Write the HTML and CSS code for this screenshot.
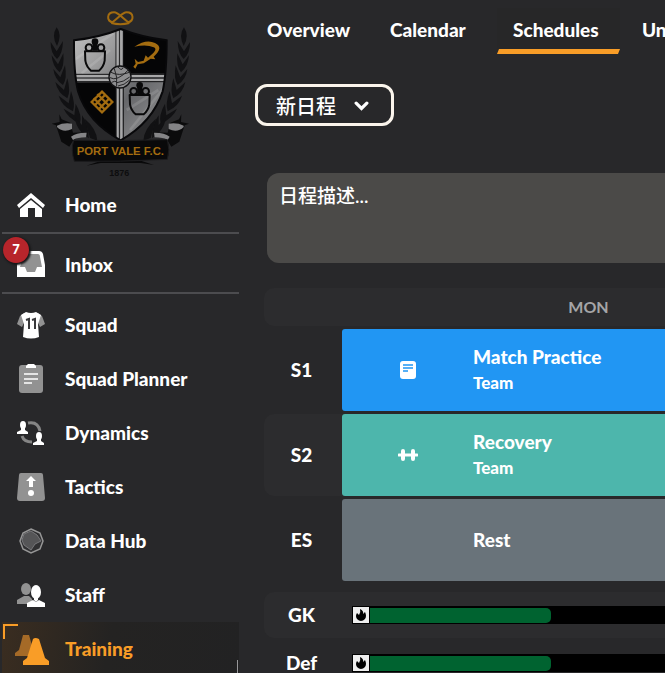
FILE: index.html
```html
<!DOCTYPE html>
<html lang="en">
<head>
    <meta charset="utf-8">
    <title>Training - Schedules</title>
    <link rel="stylesheet" href="styles.css">
</head>
<body>
<div class="app">
    <aside class="sidebar">
        <svg class="crest" viewBox="0 0 720 534" role="img" aria-label="Port Vale F.C. 1876">
            <defs>
                <linearGradient id="silver" x1="0" y1="0" x2="1" y2="1">
                    <stop offset="0" stop-color="#c2c2c2"/>
                    <stop offset=".3" stop-color="#9b9b9c"/>
                    <stop offset=".6" stop-color="#66676a"/>
                    <stop offset="1" stop-color="#9d9d9e"/>
                </linearGradient>
                <clipPath id="shield"><path d="M222 121Q300 112 362 87Q425 112 500 121Q500 220 488 274Q458 366 362 421Q262 367 234 274Q221 220 222 121Z"/></clipPath>
                <g id="vase" fill="none" stroke="#09090a" stroke-width="6">
                    <path d="M-30 -12H30L29 16Q26 34 12 46H-12Q-26 34 -29 16Z" stroke-linejoin="round"/>
                    <circle cx="-18" cy="-23" r="10"/><circle cx="18" cy="-23" r="10"/>
                    <circle cx="0" cy="-41" r="10" fill="#09090a" stroke="none"/>
                    <path d="M0 -36V-14" stroke-width="15"/>
                </g>
                <g id="laurel" fill="#111113">
                    <path d="M170 82Q187 104 171 138Q153 108 170 82Z"/>
                    <path d="M152 126L170 154L189 123Q188 162 171 177Q151 158 152 126Z"/>
                    <path d="M155 166L174 193L190 160Q194 199 179 217Q157 199 155 166Z"/>
                    <path d="M160 207L181 232L195 196Q202 236 189 255Q164 239 160 207Z"/>
                    <path d="M166 246L192 270L202 235Q213 275 202 295Q173 279 166 246Z"/>
                    <path d="M176 287L206 310L213 273Q227 312 219 334Q185 318 176 287Z"/>
                    <path d="M191 326L223 346L227 311Q247 346 240 371Q203 354 191 326Z"/>
                    <path d="M225 352L246 375L246 346Q266 372 266 415L246 399Q225 376 225 352Z"/>
                    <path d="M254 356Q290 386 292 422L270 414Z"/>
                </g>
                <g id="ribbon">
                    <path d="M178 343L185 358L211 368L219 398L262 397L219 422L208 440L184 425L168 376L155 371L179 366Z" fill="#0b0b0c"/>
                    <path d="M171 377Q190 367 216 371V387Q190 400 171 381Z" fill="#838385"/>
                    <path d="M213 410Q230 397 260 398L258 412Q232 412 219 420Z" fill="#858587"/>
                </g>
            </defs>
            <use href="#laurel"/>
            <use href="#laurel" transform="matrix(-1 0 0 1 722 0)"/>
            <g clip-path="url(#shield)">
                <path d="M215 80H505V425H215Z" fill="url(#silver)"/>
                <path d="M369 80H505V221H369ZM215 247H350V425H215Z" fill="#050506"/>
                <path d="M225 178L340 100M245 220L330 150M390 390L495 260M380 330L475 270" stroke="#fff" stroke-opacity=".12" stroke-width="8"/>
                <path d="M348 80V425M358 80V425M370 80V425M215 223H505M215 234H505M215 245H505" stroke="#151516" stroke-width="3"/>
                <path d="M353 80V425M364 80V425M215 228H505M215 240H505" stroke="#a8a8a9" stroke-width="6"/>
            </g>
            <path d="M222 121Q300 112 362 87Q425 112 500 121Q500 220 488 274Q458 366 362 421Q262 367 234 274Q221 220 222 121Z" fill="none" stroke="#08080a" stroke-width="6"/>
            <use href="#vase" transform="translate(285 166)"/>
            <use href="#vase" transform="translate(419 297)"/>
            <g fill="none" stroke="#a36c10" stroke-width="6">
                <path d="M340 68C317 62 321 37 342 37C356 37 366 55 388 69M382 68C405 62 401 37 380 37C366 37 356 55 334 69"/>
                <path d="M334 69Q361 76 388 69"/>
            </g>
            <path d="M403 140Q439 116 465 129Q493 142 461 170L466 178L452 176L431 190L413 193L406 206L400 200L407 191L404 176L414 186L431 182L437 166L444 173Q477 148 461 142Q440 132 403 140Z" fill="#a36c10"/>
            <g fill="none" stroke="#a36c10" stroke-width="7">
                <path d="M281 294L316 330M292 282L328 318M329 294L294 330M318 282L282 318M306 275L337 306L306 337L275 306Z"/>
            </g>
            <circle cx="360" cy="231" r="33" fill="#8e8e90" stroke="#111113" stroke-width="4"/>
            <g fill="none" stroke="#252527" stroke-width="3">
                <path d="M333 217Q356 230 391 216M330 233Q351 246 386 209M343 206Q353 230 350 260M353 200Q364 214 369 204M350 248Q370 247 389 231M354 258Q373 256 389 240M335 247Q346 241 350 246"/>
            </g>
            <use href="#ribbon"/>
            <use href="#ribbon" transform="matrix(-1 0 0 1 722 0)"/>
            <path d="M259 497L301 483H425L462 495L422 489H302Z" fill="#09090a"/>
            <path d="M221 421Q362 423 502 419Q511 450 502 478Q362 486 223 484Q212 450 221 421Z" fill="#09090a" stroke="#1b1b1d" stroke-width="3"/>
            <text class="crest-name" x="361" y="466" text-anchor="middle">PORT VALE F.C.</text>
            <text class="crest-year" x="358" y="527" text-anchor="middle">1876</text>
        </svg>

        <nav class="menu">
            <a class="menu-item" href="#">
                <svg class="icon" viewBox="0 0 30 30"><path fill="#fff" d="M15 3L29 15L27 18L15 8L3 18L1 15Z"/><path fill="#fff" d="M4 19L15 10L26 19V27H19V18H12V27H4Z"/></svg>
                Home
            </a>
            <a class="menu-item divided" href="#">
                <svg class="icon" viewBox="0 0 30 30"><path d="M9 1H23Q26 1 27 4L29 15V27H1V15L5 4Q6 1 9 1Z" fill="#fff"/><path d="M8 4H22Q24 4 24 7L26 17H21L19 22H11L9 17H4Z" fill="#929292"/></svg>
                Inbox
                <span class="badge">7</span>
            </a>
            <a class="menu-item divided" href="#">
                <svg class="icon" viewBox="0 0 30 30"><path d="M8 3L4 6L1 14L6 17L10 9ZM22 3L26 6L29 14L24 17L20 9Z" fill="#929292"/><path d="M10 2Q15 4 20 2L25 5L22 14L23 27Q15 30 7 27L8 14L5 5Z" fill="#fff"/><path d="M10 10L13 9V19M16 10L19 9V19" fill="none" stroke="#39393b" stroke-width="2"/></svg>
                Squad
            </a>
            <a class="menu-item" href="#">
                <svg class="icon" viewBox="0 0 30 30"><rect x="3" y="1" width="24" height="28" rx="3" fill="#929292"/><path d="M12 0H18L20 2V4H10V2Z" fill="#fff"/><path d="M8 10H22M8 15H22M8 19H16" stroke="#fff" stroke-width="1.5"/></svg>
                Squad Planner
            </a>
            <a class="menu-item" href="#">
                <svg class="icon" viewBox="0 0 30 30"><path d="M12 5Q22 3 24 13M6 18Q8 24 16 24" fill="none" stroke="#858585" stroke-width="3"/><g id="person" fill="#fff"><ellipse cx="7" cy="7" rx="3" ry="4"/><path d="M5 9H9V12L12 14V16H1V14L5 12Z"/></g><use href="#person" x="16" y="11"/></svg>
                Dynamics
            </a>
            <a class="menu-item" href="#">
                <svg class="icon" viewBox="0 0 30 30"><path d="M5 1H25Q27 1 27 3L29 26Q29 29 26 29H4Q1 29 1 26L3 3Q3 1 5 1Z" fill="#929292"/><path d="M15 4L20 9H17V15H13V9H10Z" fill="#fff"/><circle cx="15" cy="21" r="3" fill="#fff"/></svg>
                Tactics
            </a>
            <a class="menu-item" href="#">
                <svg class="icon" viewBox="0 0 30 30"><path d="M15 3L24 7L27 15L24 23L15 27L7 23L4 15L7 7Z" fill="#303032" stroke="#969696" stroke-width="1.5"/><path d="M8 8L15 5L21 9L25 15L19 18L15 24L8 19L6 14Z" fill="#555557" stroke="#77777a"/></svg>
                Data Hub
            </a>
            <a class="menu-item" href="#">
                <svg class="icon" viewBox="0 0 30 30"><ellipse cx="10" cy="9" rx="5" ry="6" fill="#929292"/><path d="M1 24V20L8 16H13L16 19V24Z" fill="#929292"/><path d="M11 27V23L17 20L20 22L23 20L29 23V27Z" fill="#fff"/><ellipse cx="20" cy="12" rx="5" ry="7" fill="#fff"/><path d="M18 16H22V20L20 22L18 20Z" fill="#fff"/></svg>
                Staff
            </a>
            <a class="menu-item active" href="#" aria-current="page">
                <svg class="icon cones" viewBox="0 0 34 32"><path d="M8 2H14L20 23H0V20L4 17Z" fill="#a56a27"/><path d="M18 6Q20 4 24 6L30 25L34 28V32H8V28L12 25Z" fill="#f99d27"/></svg>
                Training
            </a>
        </nav>
    </aside>

    <main class="content">
        <nav class="tabs">
            <a class="tab" href="#">Overview</a>
            <a class="tab" href="#">Calendar</a>
            <a class="tab selected" href="#">Schedules</a>
            <a class="tab" href="#">Units</a>
        </nav>

        <div class="picker">
            <select class="picker-select" aria-label="Schedule">
                <option>新日程</option>
            </select>
            <svg class="chevron" viewBox="0 0 14 10"><path d="M2 2L7 7L12 2" fill="none" stroke="#fff" stroke-width="3" stroke-linecap="round"/></svg>
        </div>

        <textarea class="description" aria-label="Schedule description">日程描述...</textarea>

        <table class="schedule">
            <colgroup><col class="col-slot"><col></colgroup>
            <thead>
                <tr class="shaded"><td></td><th scope="col">MON</th></tr>
            </thead>
            <tbody>
                <tr>
                    <th class="slot" scope="row">S1</th>
                    <td class="session match">
                        <div class="session-inner">
                            <svg class="session-icon" viewBox="0 0 20 20"><rect x="2" y="1" width="16" height="18" rx="3" fill="#fff"/><path d="M5 5H15M5 8H15M5 11H10" stroke="#2196f3" stroke-width="1.5"/></svg>
                            <div class="session-text">Match Practice<span>Team</span></div>
                        </div>
                    </td>
                </tr>
                <tr class="shaded">
                    <th class="slot" scope="row">S2</th>
                    <td class="session recovery">
                        <div class="session-inner">
                            <svg class="session-icon" viewBox="0 0 20 20"><path d="M1 10H19" stroke="#fff" stroke-width="3" stroke-linecap="round"/><path d="M5 6V14M15 6V14" stroke="#fff" stroke-width="4" stroke-linecap="round"/></svg>
                            <div class="session-text">Recovery<span>Team</span></div>
                        </div>
                    </td>
                </tr>
                <tr>
                    <th class="slot" scope="row">ES</th>
                    <td class="session rest">
                        <div class="session-inner">
                            <i></i>
                            <div class="session-text">Rest</div>
                        </div>
                    </td>
                </tr>
            </tbody>
        </table>

        <div class="loads">
            <div class="load shaded">
                <span class="load-name">GK</span>
                <div class="bar">
                    <svg class="flame" viewBox="0 0 16 16"><path d="M7 2Q11 4 10 7L12 5Q14 9 12 12Q8 16 4 12Q2 9 4 6L6 8Q8 5 7 2Z"/></svg>
                    <div class="bar-fill"></div>
                </div>
            </div>
            <div class="load">
                <span class="load-name">Def</span>
                <div class="bar">
                    <svg class="flame" viewBox="0 0 16 16"><path d="M7 2Q11 4 10 7L12 5Q14 9 12 12Q8 16 4 12Q2 9 4 6L6 8Q8 5 7 2Z"/></svg>
                    <div class="bar-fill"></div>
                </div>
            </div>
        </div>
    </main>
</div>
</body>
</html>
```
FILE: styles.css
```css
* {
    box-sizing: border-box;
}
body {
    margin: 0;
    background: #28282a;
    color: #fff;
    font-family: Lato, "Noto Sans CJK SC", sans-serif;
    font-size: 19px;
    font-weight: 900;
    line-height: 26px;
}
a {
    color: inherit;
    text-decoration: none;
}
.app {
    display: flex;
    height: 100vh;
    overflow: hidden;
}

/* sidebar */
.sidebar {
    flex: 0 0 240px;
}
.crest {
    display: block;
    width: 100%;
}
.crest-name {
    font: bold 34px "Liberation Sans", sans-serif;
    fill: #a36c10;
}
.crest-year {
    font: bold 27px "Liberation Sans", sans-serif;
    fill: #0d0d0e;
}
.menu {
    padding: 0 1px 0 2px;
}
.menu-item {
    position: relative;
    display: flex;
    align-items: center;
    gap: 18px;
    height: 54px;
    padding-left: 14px;
}
.divided {
    height: 60px;
    padding-top: 4px;
    border-top: 2px solid #4c4c4f;
}
.icon {
    width: 30px;
    height: 30px;
    margin-right: 1px;
}
.badge {
    position: absolute;
    top: 3px;
    left: 1px;
    width: 26px;
    height: 26px;
    border-radius: 50%;
    background: #b7252b;
    box-shadow: 1px 1px 2px 1px #171718;
    font-size: 13px;
    line-height: 25px;
    text-align: center;
}
.active {
    color: #f99d27;
    background: linear-gradient(100deg, #3a2d20, #242322 45%, #222223);
}
.active::before,
.active::after {
    content: "";
    position: absolute;
    width: 13px;
    height: 13px;
}
.active::before {
    top: 2px;
    left: 1px;
    border-top: 2px solid #f99d27;
    border-left: 2px solid #f99d27;
}
.active::after {
    right: 1px;
    bottom: 2px;
    border-right: 1px solid #98989a;
    border-bottom: 1px solid #98989a;
}
.cones {
    width: 34px;
    height: 32px;
    margin: 0 -2px 0 -1px;
}

/* main area */
.content {
    flex: 1;
    min-width: 0;
    overflow: hidden;
}
.tabs {
    display: flex;
    padding: 8px 0 0 11px;
}
.tab {
    flex: none;
    min-width: 123px;
    height: 46px;
    padding: 9px 16px;
}
.selected {
    position: relative;
    margin-right: 6px;
    background: #272728;
}
.selected::after {
    content: "";
    position: absolute;
    left: 0;
    right: 0;
    bottom: 0;
    height: 5px;
    background: #f99d27;
    clip-path: polygon(2px 0, 100% 0, calc(100% - 2px) 100%, 0 100%);
}
.picker {
    position: relative;
    width: 139px;
    margin: 30px 0 0 15px;
}
.picker-select {
    display: block;
    appearance: none;
    width: 100%;
    height: 42px;
    padding: 0 18px;
    border: 3px solid #fbf5ec;
    border-radius: 12px;
    background: transparent;
    color: #fff;
    font: 500 20px "Noto Sans CJK SC", sans-serif;
}
.chevron {
    position: absolute;
    top: 17px;
    right: 25px;
    width: 15px;
    pointer-events: none;
}
.description {
    display: block;
    width: 100%;
    height: 90px;
    margin: 47px 0 22px 27px;
    padding: 8px 12px;
    border: 0;
    border-radius: 12px;
    background: #4b4a48;
    color: #fff;
    font: 500 19px/30px Lato, "Noto Sans CJK SC", sans-serif;
    resize: none;
}
.schedule {
    width: 571px;
    margin-left: 24px;
    table-layout: fixed;
    border-spacing: 0 3px;
}
.col-slot {
    width: 78px;
}
.schedule td,
.schedule th {
    padding: 0;
}
.schedule thead th {
    height: 38px;
    color: #a5a5a7;
    font-size: 16px;
}
.shaded > *:first-child {
    border-radius: 10px 0 0 10px;
}
.shaded {
    background: #2c2c2e;
}
tr.shaded {
    background: none;
}
tr.shaded > * {
    background: #2c2c2e;
}
.schedule .slot {
    height: 82px;
    padding-right: 3px;
    font-weight: 900;
}
.schedule .session {
    border-radius: 3px;
}
.schedule .match {
    background: #2196f3;
}
.schedule .recovery {
    background: #4db6ac;
}
.schedule .rest {
    background: #69737a;
}
.session-inner {
    display: grid;
    grid-template-columns: 131px 1fr;
    align-items: center;
}
.session-icon {
    width: 20px;
    height: 20px;
    justify-self: center;
}
.session-text span {
    display: block;
    font-size: 17px;
}
.loads {
    display: grid;
    gap: 2px;
    margin: 8px 0 0 24px;
}
.load {
    display: flex;
    align-items: center;
    height: 46px;
    border-radius: 10px 0 0 10px;
}
.load-name {
    flex: 0 0 75px;
    text-align: center;
}
.bar {
    flex: 1;
    display: flex;
    align-items: center;
    gap: 1px;
    height: 18px;
    margin-left: 13px;
    padding-left: 1px;
    background: #000;
}
.flame {
    width: 16px;
    height: 16px;
    background: #eee;
}
.bar-fill {
    width: 181px;
    height: 15px;
    border-radius: 0 5px 5px 0;
    background: #006330;
}
```
